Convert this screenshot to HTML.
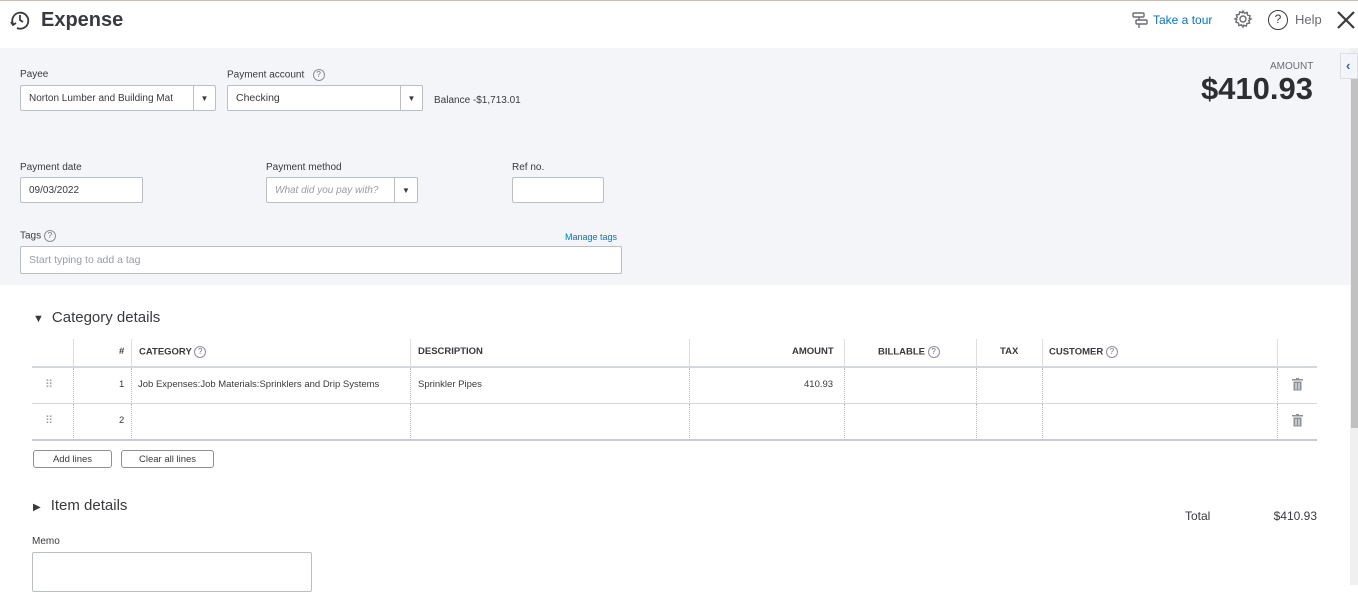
<!DOCTYPE html>
<html><head><meta charset="utf-8"><style>
*{box-sizing:border-box;margin:0;padding:0}
body{width:1358px;height:585px;overflow:hidden;background:#fff;font-family:"Liberation Sans",sans-serif;color:#393a3d;position:relative}
.a{position:absolute}
.lbl{font-size:10px;color:#393a3d}
.inp{position:absolute;background:#fff;border:1px solid #babec5;border-radius:2px;font-size:10px;padding-left:8px;display:flex;align-items:center}
.dd{position:absolute;right:0;top:0;bottom:0;width:22px;border-left:1px solid #babec5;display:flex;align-items:center;justify-content:center;font-size:8px}
.q{display:inline-block;width:12px;height:12px;border:1px solid #8d9096;border-radius:50%;font-size:8px;line-height:10px;text-align:center;color:#6b6c72;vertical-align:middle}
.th{position:absolute;top:346px;font-size:9.5px;font-weight:bold;color:#393a3d}
.vs{position:absolute;top:339px;height:27px;border-left:1px solid #dcdee2}
.vd{position:absolute;height:36px;border-left:1px dotted #b8bbc0}
.td{position:absolute;font-size:9.5px;color:#393a3d}
.btn{position:absolute;top:450px;height:18px;border:1px solid #8d9096;border-radius:3px;font-size:9.5px;display:flex;align-items:center;justify-content:center;background:#fff}
</style></head><body>
<div class="a" style="left:0;top:0;width:1358px;height:1px;background:#c9bdb8"></div>
<svg class="a" style="left:9px;top:9px" width="22" height="22" viewBox="0 0 22 22" fill="none" stroke="#393a3d" stroke-width="1.8"><path d="M4 15a8 8 0 1 1 4 4"/><path d="M11 6v5l3 2"/><path d="M2 13l2 3 3-2"/></svg>
<div class="a" style="left:41px;top:9px;font-size:20px;font-weight:bold;color:#393a3d">Expense</div>
<svg class="a" style="left:1131px;top:11px" width="18" height="18" viewBox="0 0 18 18" fill="none" stroke="#6b6c72" stroke-width="1.4"><rect x="2" y="2" width="11" height="4" rx="1"/><rect x="5" y="9" width="11" height="4" rx="1"/><path d="M8 6v3M8 13v4"/></svg>
<div class="a" style="left:1153px;top:13px;font-size:12px;color:#0077c5">Take a tour</div>
<svg class="a" style="left:1233px;top:9px" width="20" height="20" viewBox="0 0 20 20" fill="none" stroke="#6b6c72" stroke-width="1.4"><circle cx="10" cy="10" r="3"/><path d="M10 2l1.5 2.2 2.6-.8.4 2.6 2.6.8-.8 2.6L18 10l-2.2 1.5.8 2.6-2.6.4-.8 2.6-2.6-.8L10 18l-1.5-2.2-2.6.8-.4-2.6-2.6-.8.8-2.6L2 10l2.2-1.5-.8-2.6 2.6-.4.8-2.6 2.6.8z"/></svg>
<div class="a" style="left:1268px;top:10px;width:20px;height:20px;border:1.4px solid #393a3d;border-radius:50%;font-size:12px;text-align:center;line-height:17px">?</div>
<div class="a" style="left:1295px;top:12px;font-size:13px;color:#6b6c72">Help</div>
<svg class="a" style="left:1336px;top:10px" width="20" height="20" viewBox="0 0 20 20" stroke="#393a3d" stroke-width="2.2"><path d="M2 2l16 16M18 2L2 18"/></svg>

<div class="a" style="left:0;top:48px;width:1350px;height:237px;background:#f4f5f8"></div>
<div class="a" style="left:1350px;top:48px;width:8px;height:537px;background:#f0f0f0"></div>
<div class="a" style="left:1351px;top:68px;width:7px;height:360px;background:#c1c1c1"></div>
<div class="a" style="left:1340px;top:53px;width:18px;height:26px;background:#f4f5f8;border:1px solid #dcdee6;color:#2b5fb0;font-size:13px;font-weight:bold;padding-left:5px;line-height:24px">‹</div>

<div class="a lbl" style="left:20px;top:69px">Payee</div>
<div class="inp" style="left:20px;top:85px;width:196px;height:26px">Norton Lumber and Building Mat<div class="dd">▼</div></div>
<div class="a lbl" style="left:227px;top:69px">Payment account &nbsp;&nbsp;<span class="q">?</span></div>
<div class="inp" style="left:227px;top:85px;width:196px;height:26px;font-size:10.5px">Checking<div class="dd">▼</div></div>
<div class="a" style="left:434px;top:95px;font-size:10px">Balance -$1,713.01</div>
<div class="a" style="left:1270px;top:61px;font-size:10px;color:#6b6c72">AMOUNT</div>
<div class="a" style="left:1100px;top:71px;width:213px;text-align:right;font-size:31px;font-weight:bold;color:#2d2e31">$410.93</div>

<div class="a lbl" style="left:20px;top:162px">Payment date</div>
<div class="inp" style="left:20px;top:177px;width:123px;height:26px">09/03/2022</div>
<div class="a lbl" style="left:266px;top:162px">Payment method</div>
<div class="inp" style="left:266px;top:177px;width:152px;height:26px;color:#9a9ca1;font-style:italic">What did you pay with?<div class="dd" style="width:23px;color:#393a3d;font-style:normal">▼</div></div>
<div class="a lbl" style="left:512px;top:162px">Ref no.</div>
<div class="inp" style="left:512px;top:177px;width:92px;height:26px"></div>
<div class="a lbl" style="left:20px;top:230px">Tags <span class="q">?</span></div>
<div class="a" style="left:565px;top:232px;font-size:9px;color:#0077c5">Manage tags</div>
<div class="inp" style="left:20px;top:246px;width:602px;height:28px;color:#9a9ca1;font-size:10.5px">Start typing to add a tag</div>

<div class="a" style="left:33px;top:309px;font-size:15px;color:#393a3d"><span style="font-size:11px;margin-right:8px">▼</span>Category details</div>

<div class="vs" style="left:73px"></div><div class="vs" style="left:131px"></div><div class="vs" style="left:410px"></div><div class="vs" style="left:689px"></div><div class="vs" style="left:844px"></div><div class="vs" style="left:976px"></div><div class="vs" style="left:1042px"></div><div class="vs" style="left:1277px"></div>
<div class="th" style="left:119px">#</div>
<div class="th" style="left:139px">CATEGORY <span class="q" style="font-weight:normal">?</span></div>
<div class="th" style="left:418px">DESCRIPTION</div>
<div class="th" style="left:792px">AMOUNT</div>
<div class="th" style="left:878px">BILLABLE <span class="q" style="font-weight:normal">?</span></div>
<div class="th" style="left:1000px">TAX</div>
<div class="th" style="left:1049px">CUSTOMER <span class="q" style="font-weight:normal">?</span></div>
<div class="a" style="left:32px;top:366px;width:1285px;height:2px;background:#d4d7dc"></div>
<div class="a" style="left:32px;top:403px;width:1285px;height:1px;background:#d4d7dc"></div>
<div class="a" style="left:32px;top:439px;width:1285px;height:2px;background:#c8cbd0"></div>
<div class="vd" style="left:73px;top:368px"></div><div class="vd" style="left:131px;top:368px"></div><div class="vd" style="left:410px;top:368px"></div><div class="vd" style="left:689px;top:368px"></div><div class="vd" style="left:844px;top:368px"></div><div class="vd" style="left:976px;top:368px"></div><div class="vd" style="left:1042px;top:368px"></div><div class="vd" style="left:1277px;top:368px"></div>
<div class="vd" style="left:73px;top:404px"></div><div class="vd" style="left:131px;top:404px"></div><div class="vd" style="left:410px;top:404px"></div><div class="vd" style="left:689px;top:404px"></div><div class="vd" style="left:844px;top:404px"></div><div class="vd" style="left:976px;top:404px"></div><div class="vd" style="left:1042px;top:404px"></div><div class="vd" style="left:1277px;top:404px"></div>
<div class="td" style="left:45px;top:378px;color:#a0a3a8;font-size:11px">⠿</div>
<div class="td" style="left:45px;top:414px;color:#a0a3a8;font-size:11px">⠿</div>
<div class="td" style="left:119px;top:379px">1</div>
<div class="td" style="left:119px;top:415px">2</div>
<div class="td" style="left:138px;top:379px">Job Expenses:Job Materials:Sprinklers and Drip Systems</div>
<div class="td" style="left:418px;top:379px">Sprinkler Pipes</div>
<div class="td" style="left:804px;top:379px">410.93</div>
<svg class="a" style="left:1292px;top:378px" width="11" height="13" viewBox="0 0 11 13" fill="#8d9096"><rect x="0" y="1" width="11" height="1.5"/><rect x="4" y="0" width="3" height="1"/><rect x="1.5" y="3.5" width="8" height="9"/><rect x="3.5" y="5" width="1" height="6.5" fill="#fff"/><rect x="6.5" y="5" width="1" height="6.5" fill="#fff"/></svg>
<svg class="a" style="left:1292px;top:414px" width="11" height="13" viewBox="0 0 11 13" fill="#8d9096"><rect x="0" y="1" width="11" height="1.5"/><rect x="4" y="0" width="3" height="1"/><rect x="1.5" y="3.5" width="8" height="9"/><rect x="3.5" y="5" width="1" height="6.5" fill="#fff"/><rect x="6.5" y="5" width="1" height="6.5" fill="#fff"/></svg>
<div class="btn" style="left:33px;width:79px">Add lines</div>
<div class="btn" style="left:121px;width:93px">Clear all lines</div>

<div class="a" style="left:33px;top:497px;font-size:15px;color:#393a3d"><span style="font-size:10px;margin-right:10px">▶</span>Item details</div>
<div class="a" style="left:1185px;top:509px;font-size:12px">Total</div>
<div class="a" style="left:1217px;top:509px;width:100px;text-align:right;font-size:12px">$410.93</div>
<div class="a lbl" style="left:32px;top:536px">Memo</div>
<div class="a" style="left:32px;top:552px;width:280px;height:40px;border:1px solid #babec5;border-radius:2px"></div>
</body></html>
